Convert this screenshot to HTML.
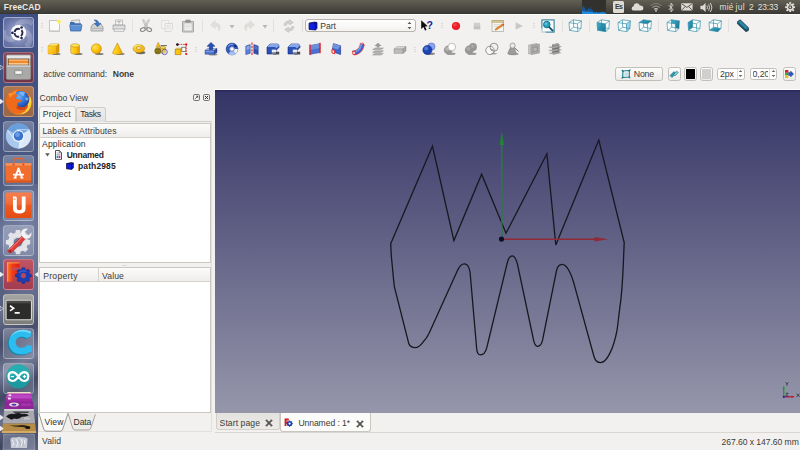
<!DOCTYPE html>
<html>
<head>
<meta charset="utf-8">
<title>FreeCAD</title>
<style>
*{box-sizing:border-box;margin:0;padding:0}
html,body{width:800px;height:450px;overflow:hidden;background:#f2f1f0;font-family:"Liberation Sans",sans-serif;font-size:9px;color:#3c3b37}
.abs{position:absolute}
#topbar{position:absolute;left:0;top:0;width:800px;height:13.6px;background:linear-gradient(#625f54 0%,#56544b 30%,#48463f 65%,#3e3d38 92%,#34332f 100%);}
#topbar .title{position:absolute;left:3px;top:1px;font-weight:bold;font-size:9.5px;color:#e8e6e0;letter-spacing:.1px}
#launcher{position:absolute;left:0;top:13.6px;width:37.6px;height:436px;background:linear-gradient(#3d4e84 0%,#46557f 28%,#586384 50%,#586080 68%,#4d5572 85%,#464d68 100%);overflow:hidden}
.tile{position:absolute;left:3px;width:31px;height:31px;border-radius:3.5px;border:1px solid rgba(255,255,255,.22);background:rgba(255,255,255,.14);overflow:hidden}
#view3d{position:absolute;left:215px;top:90px;width:585px;height:323px;background:linear-gradient(#343466 0%,#9696ab 100%)}
.t{position:absolute;white-space:nowrap}
.panel{position:absolute;background:#fff;border:1px solid #c9c6c1}
</style>
</head>
<body>
<!-- TOP BAR -->
<div id="topbar">
<!-- system monitor -->
<div class="abs" style="left:582px;top:0;width:24px;height:14px;background:#32312d"></div>
<svg class="abs" style="left:582px;top:0" width="24" height="14" viewBox="0 0 24 14"><path d="M0,14 V8 L0.6,6.4 L1,8 L1.6,4.8 L2.2,8.4 L2.8,6.6 L3.4,10 L4.4,9.4 L5,10.8 L6,8.6 L6.6,7.6 L7.2,9.8 L8,8.2 L8.6,7 L9.2,9 L10,10.4 L10.8,9.6 L11.4,11.8 L13,12 L14,12.4 L14.6,10 L15.2,12.4 L17,12.6 L18,11.6 L18.6,12.4 L19.6,11 L20.4,12.2 L21.4,11.2 L22.4,11.6 L23,12.4 L24,12.6 V14Z" fill="#1a5590"/><path d="M0,14 V11.6 L1,11 L2,11.8 L3,11.2 L4,12 L6,11.4 L8,12 L10,11.8 L11,12.6 L14,12.8 L14.6,12 L15.2,12.8 L18,12.8 L19.6,12.2 L21.4,12.4 L24,13 V14Z" fill="#1e8ee0"/></svg>
<!-- keyboard Es -->
<div class="abs" style="left:612.5px;top:1.1px;width:11.7px;height:11.5px;background:#dfdbd2;border-radius:1.5px"></div>
<!-- cloud -->
<svg class="abs" style="left:631px;top:2px" width="13" height="10" viewBox="0 0 13 10"><path d="M3.2,8.6 Q0.6,8.6 0.6,6.4 Q0.6,4.6 2.6,4.2 Q2.8,1.2 5.8,1.2 Q8.2,1.2 8.8,3.4 Q12.4,3.2 12.4,6.2 Q12.4,8.6 10,8.6Z" fill="#dfdbd2"/></svg>
<!-- wifi -->
<svg class="abs" style="left:650px;top:2px" width="12" height="10" viewBox="0 0 12 10"><path d="M0.6,3.8 Q6,-1 11.4,3.8" stroke="#7c7a74" stroke-width="1.1" fill="none"/><path d="M2.4,5.6 Q6,2.4 9.6,5.6" stroke="#a4a29c" stroke-width="1.1" fill="none"/><path d="M4.2,7.4 Q6,5.8 7.8,7.4" stroke="#d8d4cc" stroke-width="1.1" fill="none"/><circle cx="6" cy="8.8" r=".9" fill="#dfdbd2"/></svg>
<!-- bluetooth -->
<svg class="abs" style="left:667.5px;top:1.5px" width="6" height="11" viewBox="0 0 6 11"><path d="M0.8,3.2 L5,7.6 L3,9.8 V1.2 L5,3.4 L0.8,7.8" stroke="#dfdbd2" stroke-width=".9" fill="none"/></svg>
<!-- mail -->
<svg class="abs" style="left:681px;top:2.8px" width="12" height="8" viewBox="0 0 12 8"><rect x="0.2" y="0.2" width="11.4" height="7.2" rx=".8" fill="#dfdbd2"/><path d="M1,1 L5.9,4.4 L10.8,1 M1,6.8 L4.2,3.6 M10.8,6.8 L7.6,3.6" stroke="#45443f" stroke-width=".9" fill="none"/></svg>
<!-- sound -->
<svg class="abs" style="left:699.6px;top:1.6px" width="13" height="11" viewBox="0 0 13 11"><path d="M0.4,3.8 H2.6 L5.6,1 V10 L2.6,7.2 H0.4Z" fill="#dfdbd2"/><path d="M7,3.8 Q8,5.5 7,7.2 M8.6,2.4 Q10.6,5.5 8.6,8.6 M10.2,1 Q13.4,5.5 10.2,10" stroke="#dfdbd2" stroke-width=".95" fill="none"/></svg>
<!-- gear -->
<svg class="abs" style="left:785px;top:1.6px" width="10.4" height="10.4" viewBox="-5.5 -5.5 11 11"><g fill="#dfdbd2"><circle r="3.7"/><g id="tt"><rect x="-1" y="-5.4" width="2" height="3"/><rect x="-1" y="2.4" width="2" height="3"/></g><use href="#tt" transform="rotate(45)"/><use href="#tt" transform="rotate(90)"/><use href="#tt" transform="rotate(135)"/></g><circle r="2" fill="#45443f"/><circle r="1" fill="#dfdbd2"/><rect x="-.55" y="-3.6" width="1.1" height="3.2" fill="#45443f"/><rect x="-.3" y="-3.4" width=".6" height="2.6" fill="#dfdbd2"/></svg>
</div>

<div class="abs" style="left:38px;top:13.6px;width:762px;height:1.4px;background:#fbfbfa"></div>
<!-- LAUNCHER -->
<div id="launcher">
<div class="abs" style="left:-6px;top:170px;width:50px;height:150px;background:radial-gradient(ellipse at 65% 35%,rgba(170,182,214,.42),rgba(170,182,214,0) 65%)"></div>
<div class="abs" style="left:-10px;top:196px;width:30px;height:60px;background:radial-gradient(ellipse at 50% 50%,rgba(150,165,205,.4),rgba(150,165,205,0) 70%)"></div>
<div class="abs" style="left:0;top:296px;width:38px;height:140px;background:linear-gradient(150deg,rgba(150,158,185,.28) 0%,rgba(20,25,50,.22) 22%,rgba(165,172,196,.42) 40%,rgba(30,35,60,.25) 55%,rgba(160,168,192,.38) 70%,rgba(30,35,60,.2) 84%,rgba(140,146,170,.3) 100%)"></div>
<div class="tile" style="top:3.7px;background:radial-gradient(circle at 50% 50%,rgba(200,206,236,.8),rgba(125,135,185,.6) 78%);border-color:rgba(255,255,255,.4)"><svg width="29" height="29" viewBox="0 0 29 29" style="position:absolute;left:0;top:0"><path d="M14.5,14.5 C8,4 22,0 29,6 M14.5,14.5 C26,10 30,22 22,29 M14.5,14.5 C10,26 -2,22 0,12" stroke="rgba(255,255,255,.2)" stroke-width="5" fill="none"/><circle cx="14.5" cy="14.8" r="7.7" fill="#fcfcfe"/><circle cx="14.5" cy="14.8" r="4" fill="none" stroke="#26264a" stroke-width="1.9" stroke-dasharray="6.6 1.78" stroke-dashoffset="-0.9" transform="rotate(180 14.5 14.8)"/><circle cx="8.4" cy="14.8" r="1.35" fill="#26264a"/><circle cx="17.55" cy="9.5" r="1.35" fill="#26264a"/><circle cx="17.55" cy="20.1" r="1.35" fill="#26264a"/></svg></div>
<div class="tile" style="top:38.2px;background:linear-gradient(#8a4658,#6e3346);border-color:rgba(255,210,220,.35)"><svg width="29" height="29" viewBox="0 0 29 29" style="position:absolute;left:0;top:0"><g transform="translate(14.5 14.5) scale(1.1) translate(-14.5 -14.5)"><path d="M4.5,3 H24.5 Q25.5,3 25.5,4 V24 Q25.5,25.5 24,25.5 H5 Q3.5,25.5 3.5,24 V4 Q3.5,3 4.5,3Z" fill="#b9b9b7" stroke="#7e7e7c" stroke-width=".6"/><path d="M3.8,3.6 H25.2 V6 H3.8Z" fill="#e6e6e4"/><path d="M5,6.5 H24 V12.5 H5Z" fill="#5a3c28"/><path d="M5.5,7 H23.5 V8.6 H5.5Z" fill="#f7b070"/><path d="M5.5,8.6 H23.5 V11 H5.5Z" fill="#f08a28"/><path d="M5.5,10.4 H23.5 V12 H5.5Z" fill="#f9c890"/><path d="M3.8,12.6 H25.2 V25 H3.8Z" fill="#a9a9a7"/><path d="M3.8,12.6 H25.2 V14 H3.8Z" fill="#c9c9c7"/><rect x="11" y="17" width="7" height="4" rx=".8" fill="#dededc" stroke="#6e6e6c" stroke-width=".6"/><rect x="12.5" y="18.3" width="4" height="1.4" fill="#fafafa"/></g></svg></div>
<div class="tile" style="top:72.8px;background:linear-gradient(#b07850,#9a6644);border-color:rgba(255,225,200,.35)"><svg width="29" height="29" viewBox="0 0 29 29" style="position:absolute;left:0;top:0"><g transform="translate(14.5 14.5) scale(1.12) translate(-14.5 -14.5)"><defs><radialGradient id="ffo" cx=".35" cy=".4" r=".8"><stop offset="0" stop-color="#f47a20"/><stop offset=".6" stop-color="#ee6418"/><stop offset="1" stop-color="#fcc030"/></radialGradient><radialGradient id="ffb" cx=".4" cy=".35" r=".7"><stop offset="0" stop-color="#6ab4f8"/><stop offset=".6" stop-color="#2c6cd0"/><stop offset="1" stop-color="#1a3c9a"/></radialGradient></defs><circle cx="14.8" cy="15" r="11.2" fill="url(#ffo)"/><path d="M24.6,9.6 Q27,14 25.4,19 Q23,25 16.6,26 Q22.6,22.6 22.8,16.6 Q24.4,13.6 24.6,9.6Z" fill="#fdd23c"/><circle cx="16.4" cy="12.6" r="7.6" fill="url(#ffb)"/><path d="M15,6.2 Q18,4.8 20.6,6.4 Q19,7.6 19.6,9.4 Q17.4,9.6 16.6,8 Q15,7.6 15,6.2Z M20.6,11 Q22.4,10.4 23.6,12 Q22.6,14 21,13.6Z" fill="#8cc8fc" opacity=".75"/><path d="M5.4,7.6 Q7.6,6.4 9,7.2 Q10.6,5 13.4,4.4 Q11.8,6 12,7.4 Q13.4,8.4 13.4,10.4 Q12,10.2 11,10.8 Q12,12.6 14.2,12.8 Q16,12.6 17.4,13.6 Q16.4,15.2 14.4,15.4 Q13,16.4 13.6,18 Q15.6,20.4 19,19.8 Q22,19 23,16.4 Q23.4,21 19.6,23.6 Q15.4,26 10.6,24.6 Q5,22.4 3.8,16.6 Q3,11.6 5.4,7.6Z" fill="#ef6a1a"/><path d="M5.4,7.6 Q7.6,6.4 9,7.2 Q10.6,5 13.4,4.4 Q11.8,6 12,7.4 Q9,8 7.4,11 Q6,10 5.4,7.6Z" fill="#f8942c"/><path d="M13.6,18 Q15.6,20.4 19,19.8 Q22,19 23,16.4 Q22.6,19.6 20,21.4 Q16,23 12.6,20.6 Q12.8,19 13.6,18Z" fill="#c8441a"/></g></svg></div>
<div class="tile" style="top:107.3px;background:linear-gradient(rgba(255,255,255,.26),rgba(255,255,255,.10));border-color:rgba(255,255,255,.28)"><svg width="29" height="29" viewBox="0 0 29 29" style="position:absolute;left:0;top:0"><g transform="translate(14.5 14.5) scale(1.1) translate(-14.5 -14.5)"><circle cx="14.5" cy="14" r="11.4" fill="#8cb8e8"/><path d="M14.5,14 L4.6,8.4 A11.4,11.4 0 0 1 24.4,8.4 Z" fill="#6a9edc"/><path d="M14.5,14 L24.4,8.4 A11.4,11.4 0 0 1 14.5,25.4 Z" fill="#dce8f8"/><path d="M14.5,14 L14.5,25.4 A11.4,11.4 0 0 1 4.6,8.4 Z" fill="#a8c8ee"/><path d="M4.4,8.6 L11,18 M24.6,8.4 H13 M14.6,25.4 L19.8,16" stroke="#eef4fc" stroke-width=".8" opacity=".8"/><circle cx="14.5" cy="14" r="5.4" fill="#eef4fc"/><circle cx="14.5" cy="14" r="4.3" fill="#3a72cc"/><circle cx="13.6" cy="12.8" r="2.2" fill="#6a9ce4"/></g></svg></div>
<div class="tile" style="top:141.9px;background:linear-gradient(rgba(255,255,255,.26),rgba(255,255,255,.10));border-color:rgba(255,255,255,.28)"><svg width="29" height="29" viewBox="0 0 29 29" style="position:absolute;left:0;top:0"><path d="M9.6,8 V5.4 Q9.6,2.6 12.2,2.6 H16.8 Q19.4,2.6 19.4,5.4 V8" stroke="#e4602a" stroke-width="1.5" fill="none"/><path d="M1.6,7.2 H27.4 L27,26.4 H2Z" fill="#f06e2e"/><path d="M1.6,7.2 H27.4 L27.3,9.6 H1.7Z" fill="#f89460"/><path d="M2,24.6 H27 V26.4 H2Z" fill="#d6561e"/><circle cx="9.6" cy="8.6" r="1" fill="#c84c18"/><circle cx="19.4" cy="8.6" r="1" fill="#c84c18"/><path d="M14.5,12.4 L11.2,21.4 M14.5,12.4 L17.8,21.4 M9.8,18.6 H19.2" stroke="#fff" stroke-width="1.8" stroke-linecap="round" fill="none"/><path d="M9.6,21.8 H12.6 M16.4,21.8 H19.4" stroke="#fff" stroke-width="1.3"/></svg></div>
<div class="tile" style="top:176.5px;background:linear-gradient(rgba(255,255,255,.26),rgba(255,255,255,.10));border-color:rgba(255,255,255,.28)"><svg width="29" height="29" viewBox="0 0 29 29" style="position:absolute;left:0;top:0"><defs><linearGradient id="u1g" x1="0" y1="0" x2="0" y2="1"><stop offset="0" stop-color="#f8703a"/><stop offset=".5" stop-color="#ee5a20"/><stop offset="1" stop-color="#e44c12"/></linearGradient></defs><rect x="1.6" y="1.6" width="26" height="25.4" rx="1.6" fill="url(#u1g)"/><path d="M1.6,1.6 H27.6 V13 Q14,16 1.6,13Z" fill="#fff" opacity=".10"/><path d="M9,5.6 H11.8 L12.8,6.6 V17 Q12.8,19.2 15.3,19.2 Q17.8,19.2 17.8,17 V5.6 H21.6 V17.6 Q21.6,22.6 15.3,22.6 Q9,22.6 9,17.6Z" fill="#fff"/><path d="M9,8.6 L11.4,6.8 V9Z" fill="#f2a080"/></svg></div>
<div class="tile" style="top:211.0px;background:linear-gradient(rgba(255,255,255,.26),rgba(255,255,255,.10));border-color:rgba(255,255,255,.28)"><svg width="29" height="29" viewBox="0 0 29 29" style="position:absolute;left:0;top:0"><g transform="translate(14,15.2)"><path d="M-2.4,-12.6 H2.4 L3,-9.6 L5.6,-8.6 L8.2,-10.2 L11.4,-7 L9.8,-4.4 L10.8,-1.8 L13.8,-1.2 V3.4 L10.8,4 L9.8,6.6 L11.4,9.2 L8.2,12.4 L5.6,10.8 L3,11.8 L2.4,14.8 H-2.4 L-3,11.8 L-5.6,10.8 L-8.2,12.4 L-11.4,9.2 L-9.8,6.6 L-10.8,4 L-13.8,3.4 V-1.2 L-10.8,-1.8 L-9.8,-4.4 L-11.4,-7 L-8.2,-10.2 L-5.6,-8.6 L-3,-9.6Z" fill="#e4e4e8" transform="scale(.88)"/><circle cx="0" cy="1" r="5.4" fill="#cfd0d8"/><circle cx="0" cy="1" r="4.2" fill="#6e7a9e"/></g><path d="M4.6,23.4 L18.4,9.6 L21.6,12.8 L7.8,26.4 Q5.8,27.6 4.4,26.2 Q3.2,24.8 4.6,23.4Z" fill="#dc3c3a" stroke="#9c2020" stroke-width=".5"/><path d="M5.8,23.6 L18.4,11" stroke="#f48c88" stroke-width="1"/><circle cx="6.2" cy="25" r=".9" fill="#8c1c1c"/><path d="M17.4,9.4 Q16,5 19.6,3 Q21.8,2 24,2.8 L21,5.8 L21.8,8.4 L24.6,9.2 L27.4,6.2 Q28.2,9.4 25.8,11.8 Q23.4,13.6 20.4,12.4Z" fill="#f4f4f6" stroke="#b8b8c0" stroke-width=".4"/></svg></div>
<div class="tile" style="top:245.5px;background:linear-gradient(#c05464,#a23c50);border-color:rgba(255,200,210,.4)"><svg width="29" height="29" viewBox="0 0 29 29" style="position:absolute;left:0;top:0"><defs><linearGradient id="fcf" x1="0" y1="0" x2="1" y2="0"><stop offset="0" stop-color="#fa7a2c"/><stop offset=".45" stop-color="#f03c14"/><stop offset="1" stop-color="#e01c10"/></linearGradient></defs><path d="M3,2.2 H15.4 V7.4 H8.6 V10.2 H13 V15.2 H8.6 V21.8 H3Z" fill="url(#fcf)"/><path d="M3,2.2 H15.4 V3.4 H4.2 V21.8 H3Z" fill="#fca050" opacity=".8"/><g transform="translate(19.4,15.6) scale(.74)"><path d="M-1.7,-8.8 H1.7 L2.3,-6.4 L4.2,-5.6 L6.3,-6.9 L8.7,-4.5 L7.4,-2.4 L8.2,-0.5 L10.6,0.1 V3.5 L8.2,4.1 L7.4,6 L8.7,8.1 L6.3,10.5 L4.2,9.2 L2.3,10 L1.7,12.4 H-1.7 L-2.3,10 L-4.2,9.2 L-6.3,10.5 L-8.7,8.1 L-7.4,6 L-8.2,4.1 L-10.6,3.5 V0.1 L-8.2,-0.5 L-7.4,-2.4 L-8.7,-4.5 L-6.3,-6.9 L-4.2,-5.6 L-2.3,-6.4Z" transform="translate(0,-1.8)" fill="#1c3eb4" stroke="#0c1e74" stroke-width=".6"/><circle cx="0" cy="0" r="3.5" fill="#b24a5c"/><path d="M-6,-4 Q-2,-8 4,-6" stroke="#5c84f0" stroke-width="1.2" fill="none" opacity=".8"/></g></svg></div>
<div class="tile" style="top:280.1px;background:linear-gradient(#a4a4a2,#7c7c7a);border-color:rgba(255,255,255,.4)"><svg width="29" height="29" viewBox="0 0 29 29" style="position:absolute;left:0;top:0"><g transform="translate(14.5 14.5) scale(1.08) translate(-14.5 -14.5)"><rect x="3" y="6" width="23.5" height="18" rx="1.2" fill="#2c2c2a" stroke="#d8d8d6" stroke-width="1"/><rect x="3.6" y="6.6" width="22.3" height="2.2" fill="#4a4a48"/><path d="M6.6,11 L10,13.4 L6.6,15.8" stroke="#fff" stroke-width="1.5" fill="none"/><path d="M11,17.6 H15.6" stroke="#fff" stroke-width="1.5"/></g></svg></div>
<div class="tile" style="top:314.6px;background:linear-gradient(rgba(255,255,255,.26),rgba(255,255,255,.10));border-color:rgba(255,255,255,.28)"><svg width="29" height="29" viewBox="0 0 29 29" style="position:absolute;left:0;top:0"><path d="M25.6,8.6 L25.6,3.6 Q20,0.6 13.6,2.2 Q4.4,4.8 3.6,14 Q3.4,22.6 11,25.6 Q18.6,27.8 26.6,23.4 L26.6,17.6 L22,17.2 Q18.6,20.6 14,19.4 Q10.4,18 10.4,14 Q10.8,9.6 15,8.8 Q18.6,8.4 21.4,10.2Z" fill="#1a84a6"/><path d="M26.8,7.6 L26.8,2.6 Q21.2,-0.4 14.8,1.2 Q5.6,3.8 4.8,13 Q4.6,21.6 12.2,24.6 Q19.8,26.8 27.8,22.4 L27.8,16.6 L23.2,16.2 Q19.8,19.6 15.2,18.4 Q11.6,17 11.6,13 Q12,8.6 16.2,7.8 Q19.8,7.4 22.6,9.2Z" fill="#2cbcf0"/><path d="M26.8,2.6 Q21.2,-0.4 14.8,1.2 Q8.6,3 6,8.6 Q9.6,3.8 15.4,2.8 Q21,2 26.8,4.6Z" fill="#84e2fc" opacity=".8"/></svg></div>
<div class="tile" style="top:349.2px;background:linear-gradient(rgba(255,255,255,.26),rgba(255,255,255,.10));border-color:rgba(255,255,255,.28)"><svg width="29" height="29" viewBox="0 0 29 29" style="position:absolute;left:0;top:0"><circle cx="14.4" cy="12.6" r="12" fill="#1c9aa0"/><path d="M2.4,12.6 A12,12 0 0 1 26.4,12.6Z" fill="#26aeb2"/><path d="M14.4,12.6 Q11.4,8.2 8.4,8.2 Q4.6,8.4 4.6,12.6 Q4.6,16.8 8.4,17 Q11.4,17 14.4,12.6 Q17.4,8.2 20.4,8.2 Q24.2,8.4 24.2,12.6 Q24.2,16.8 20.4,17 Q17.4,17 14.4,12.6Z" fill="none" stroke="#fff" stroke-width="2.2"/><path d="M6.8,12.6 H10 M18.8,12.6 H22.2 M20.5,11 V14.2" stroke="#fff" stroke-width="1.2"/></svg></div>
<svg class="abs" style="left:0;top:376.4px" width="38" height="60" viewBox="0 390 38 60"><path d="M7.4,392 H30.6 L33.6,409 H4.4Z" fill="#a428a8"/><path d="M7.4,392 H30.6 L30.9,393.4 H7.1Z" fill="#e8e0c8"/><path d="M6.6,394.6 H31.4 L32.2,398.6 H5.8Z" fill="#c450cc" opacity=".75"/><rect x="8.6" y="394.4" width="2.6" height="1.7" fill="#f4e8f8"/><rect x="8" y="397.6" width="2.8" height="1.9" fill="#f4e8f8"/><path d="M5,401.4 H33 L33.6,409 H4.4Z" fill="#8c2494" opacity=".85"/><ellipse cx="14" cy="404.6" rx="4.8" ry="2" fill="#dcd8e0"/><ellipse cx="14" cy="404.8" rx="2.5" ry=".95" fill="#5c2cb4"/><path d="M21,403.4 H31 L31.4,406 H21Z" fill="#b040b8" opacity=".6"/><path d="M4.4,409 H33.6 L35.2,423.5 H2.8Z" fill="#a8a8b0"/><path d="M4.4,409 H33.6 L33.8,410.8 H4.2Z" fill="#d4d4d8"/><path d="M6,416.6 Q9,413 14,414 Q18,412 22,414 Q27,413.4 29,415.4 Q25,417 22,416.8 Q18,420 14,418.6 Q12,420.2 10,419 Q8,418 6,416.6Z" fill="#18181c"/><path d="M13,411.4 H29 L28,413 H14Z" fill="#404044"/><path d="M24,417.6 Q28,417 31,418.6 Q28,420 24,419.4Z" fill="#c8c8cc"/><path d="M2.8,423.5 H35.2 L36.2,433 H1.8Z" fill="#b48c48"/><path d="M8,425 Q14,426 20,425.2 Q26,424.6 29,427 Q25,428.2 23,427 Q16,427.6 8,425Z" fill="#2c2418"/><ellipse cx="27.8" cy="427.4" rx="2.6" ry="1.5" fill="#18140c"/><path d="M2,431 H36 L36.2,433 H1.8Z" fill="#d4ac64"/><path d="M3.6,434 H34.4 L35,450 H3Z" fill="rgba(200,205,225,.30)" stroke="rgba(255,255,255,.32)" stroke-width=".7"/><path d="M10.4,438.6 Q13,436.6 16,437.6 Q19,436 22,437.4 Q25.6,436.8 27.6,438.8 L27,448 H11Z" fill="rgba(232,234,240,.72)"/><path d="M12,440 L14,443 L12.6,446 M16,439 L18,442.6 L16.6,446.6 M21,439 L22.6,442 L21,446 M25,440 L24.4,444" stroke="rgba(255,255,255,.85)" stroke-width=".9" fill="none"/><path d="M14,441 L16.6,444 M19,440 L20.6,445 M23.4,441 L23,446" stroke="rgba(150,155,175,.7)" stroke-width=".7" fill="none"/></svg>
<svg class="abs" style="left:0;top:51.0px" width="4" height="5" viewBox="0 0 4 5"><path d="M0,0 L3.4,2.5 L0,5Z" fill="none" stroke="#e4e4ec" stroke-width=".7"/></svg>
<svg class="abs" style="left:0;top:85.6px" width="4" height="5" viewBox="0 0 4 5"><path d="M0,0 L3.4,2.5 L0,5Z" fill="#f0f0f4" stroke="#e4e4ec" stroke-width=".7"/></svg>
<svg class="abs" style="left:0;top:258.3px" width="4" height="5" viewBox="0 0 4 5"><path d="M0,0 L3.4,2.5 L0,5Z" fill="#f0f0f4" stroke="#e4e4ec" stroke-width=".7"/></svg>
<svg class="abs" style="left:0;top:292.9px" width="4" height="5" viewBox="0 0 4 5"><path d="M0,0 L3.4,2.5 L0,5Z" fill="none" stroke="#e4e4ec" stroke-width=".7"/></svg>
<svg class="abs" style="left:0;top:401.9px" width="4" height="5" viewBox="0 0 4 5"><path d="M0,0 L3.4,2.5 L0,5Z" fill="#f0f0f4" stroke="#e4e4ec" stroke-width=".7"/></svg>
<svg class="abs" style="left:0;top:412.4px" width="4" height="5" viewBox="0 0 4 5"><path d="M0,0 L3.4,2.5 L0,5Z" fill="#f0f0f4" stroke="#e4e4ec" stroke-width=".7"/></svg>
<svg class="abs" style="left:33.8px;top:258.4px" width="4" height="5" viewBox="0 0 4 5"><path d="M4,0 L0.6,2.5 L4,5Z" fill="#f0f0f4"/></svg>
</div>

<!-- TOOLBARS -->
<div id="toolbars">
<div class="abs" style="left:41.0px;top:23.3px;width:2px;height:1px;background:#dcdad6;box-shadow:0 2px 0 #dcdad6,0 4px 0 #dcdad6"></div>
<div class="abs" style="left:41.0px;top:46.8px;width:2px;height:1px;background:#dcdad6;box-shadow:0 2px 0 #dcdad6,0 4px 0 #dcdad6"></div>
<svg class="abs" style="left:48.0px;top:18.8px" width="14" height="14" viewBox="0 0 14 14" ><path d="M1.5,1.5 H11.5 V12.5 H1.5 Z" fill="#fafafa" stroke="#b9b7b2" stroke-width=".8"/><path d="M2,11 H11 V12.2 H2Z" fill="#dcdad6"/><circle cx="11" cy="2.6" r="2.1" fill="#fff27a"/><circle cx="11" cy="2.6" r="1.1" fill="#ffe935"/></svg>
<svg class="abs" style="left:69.0px;top:18.8px" width="14" height="14" viewBox="0 0 14 14" ><path d="M2.5,1.5 L10.5,0.8 L11,6 L3,6 Z" fill="#e8e8e8" stroke="#8e8e8e" stroke-width=".6"/><path d="M1,3 H5 L6,4.2 H12 V6 H1Z" fill="#3f6fb0"/><path d="M0.8,5.8 H13 L11.8,12 H1.6 Z" fill="#5b8fd6" stroke="#2f5c99" stroke-width=".7"/><path d="M1.2,6.3 H12.4" stroke="#9cc0ee" stroke-width=".6"/></svg>
<svg class="abs" style="left:90.0px;top:18.8px" width="14" height="14" viewBox="0 0 14 14" ><path d="M1,8 L3,5 H11 L13,8 V12 H1Z" fill="#cfd0d1" stroke="#86878a" stroke-width=".7"/><path d="M1.3,9 H12.7 V11.8 H1.3Z" fill="#b5b6b8"/><path d="M2,10.5 H12" stroke="#ededed" stroke-width=".6"/><path d="M4,1 C7,0.6 8.6,2 8.6,4.2 H10.8 L7.6,7.8 L4.4,4.2 H6.4 C6.4,2.8 5.4,1.6 4,1Z" fill="#3a78c8" stroke="#1f4f90" stroke-width=".5"/></svg>
<svg class="abs" style="left:111.5px;top:18.8px" width="14" height="14" viewBox="0 0 14 14" ><path d="M3.5,1 H10.5 V6 H3.5Z" fill="#f4f4f4" stroke="#a9a9a9" stroke-width=".7"/><path d="M5,2.6 H9 M7,2.6 V4.6" stroke="#999" stroke-width=".7"/><path d="M1,6 H13 V10.5 H1Z" fill="#d2d2d2" stroke="#9b9b9b" stroke-width=".7"/><path d="M2,10 H12 V12.5 H2Z" fill="#ececec" stroke="#a9a9a9" stroke-width=".6"/><path d="M1.5,8.2 H12.5" stroke="#f3f3f3" stroke-width=".7"/></svg>
<div class="abs" style="left:131.7px;top:19.3px;width:1px;height:13px;background:#e3e1dd"></div>
<svg class="abs" style="left:138.5px;top:18.8px" width="14" height="14" viewBox="0 0 14 14" ><path d="M3.6,0.8 L5,0.8 L8.6,8.6 L7,9.2Z M10.4,0.8 L9,0.8 L5.4,8.6 L7,9.2Z" fill="#e9e9e8" stroke="#a4a4a2" stroke-width=".6"/><ellipse cx="3.9" cy="10.6" rx="2.5" ry="1.7" fill="none" stroke="#8a8a88" stroke-width="1.2" transform="rotate(-20 3.9 10.6)"/><ellipse cx="10.1" cy="10.6" rx="2.5" ry="1.7" fill="none" stroke="#8a8a88" stroke-width="1.2" transform="rotate(20 10.1 10.6)"/></svg>
<svg class="abs" style="left:159.7px;top:18.8px" width="14" height="14" viewBox="0 0 14 14" ><path d="M1.5,1.5 H8.5 V9.5 H1.5Z" fill="#f4f3f2" stroke="#dddbd8" stroke-width=".8"/><path d="M5,4.5 H12.5 V10.5 L10.5,12.5 H5Z" fill="#f1f0ef" stroke="#d6d4d1" stroke-width=".8"/><path d="M6.5,6.5 H11 M6.5,8 H11 M6.5,9.5 H10" stroke="#dedcd9" stroke-width=".6"/></svg>
<svg class="abs" style="left:181.0px;top:18.8px" width="14" height="14" viewBox="0 0 14 14" ><path d="M1.5,2.5 H12.5 V13 H1.5Z" fill="#d2d2d0" stroke="#9a9a98" stroke-width=".8"/><path d="M3,4 H11 V11.8 H3Z" fill="#f3f3f2" stroke="#a7a7a5" stroke-width=".5"/><path d="M4.8,1 H9.2 V3.4 H4.8Z" fill="#9b9b99" stroke="#7d7d7b" stroke-width=".5"/><path d="M4.2,6 H9.8 M4.2,7.6 H9.8 M4.2,9.2 H8.5" stroke="#d0d0ce" stroke-width=".6"/></svg>
<div class="abs" style="left:201.7px;top:19.3px;width:1px;height:13px;background:#e3e1dd"></div>
<svg class="abs" style="left:208.5px;top:18.8px" width="14" height="14" viewBox="0 0 14 14" ><path d="M6.2,1.5 L1.5,5.8 L6.2,9.5 V7.3 C9,7.1 10.4,8.6 9.6,12 C12.6,9.4 12,4.2 6.2,4 Z" fill="#e0deda" stroke="#d6d4d0" stroke-width=".5"/></svg>
<svg class="abs" style="left:228.7px;top:23.9px" width="6" height="5" viewBox="0 0 6 5" ><path d="M0.5,1 H5.5 L3,4.5Z" fill="#b9b7b3"/></svg>
<svg class="abs" style="left:242.0px;top:18.8px" width="14" height="14" viewBox="0 0 14 14" ><path d="M7.8,1.5 L12.5,5.8 L7.8,9.5 V7.3 C5,7.1 3.6,8.6 4.4,12 C1.4,9.4 2,4.2 7.8,4 Z" fill="#e0deda" stroke="#d6d4d0" stroke-width=".5"/></svg>
<svg class="abs" style="left:262.0px;top:23.9px" width="6" height="5" viewBox="0 0 6 5" ><path d="M0.5,1 H5.5 L3,4.5Z" fill="#b9b7b3"/></svg>
<div class="abs" style="left:273.4px;top:19.3px;width:1px;height:13px;background:#e3e1dd"></div>
<svg class="abs" style="left:281.5px;top:18.8px" width="14" height="14" viewBox="0 0 14 14" ><path d="M2,6.4 C2,3.4 4.6,1.6 7.4,2 L7.4,0.6 L11.4,3.4 L7.4,6 V4.4 C5.8,4.2 4.6,5 4.4,6.4Z" fill="#d0cfcd" stroke="#bcbbb9" stroke-width=".5"/><path d="M12,7.6 C12,10.6 9.4,12.4 6.6,12 L6.6,13.4 L2.6,10.6 L6.6,8 V9.6 C8.2,9.8 9.4,9 9.6,7.6Z" fill="#d0cfcd" stroke="#bcbbb9" stroke-width=".5"/></svg>
<div class="abs" style="left:302.0px;top:19.3px;width:1px;height:13px;background:#e3e1dd"></div>
<div class="abs" style="left:305px;top:19px;width:110.5px;height:13px;border:1px solid #b8b5af;border-radius:3px;background:linear-gradient(#ffffff,#f3f2f0)"></div>
<svg class="abs" style="left:308.0px;top:20.6px" width="10" height="10" viewBox="0 0 10 10" ><path d="M1,2.2 L6.6,1 L9,1.6 L9,7.6 L7.4,9 L1,8.4Z" fill="#0a18c8" stroke="#050a50" stroke-width=".7"/><path d="M1,2.2 L6.8,2.2 L9,1.6 M6.8,2.2 L7.2,9" stroke="#050a50" stroke-width=".6" fill="none"/><path d="M1.3,2.5 H6.6 L7,8.6 L1.3,8.1Z" fill="#1020e0"/></svg>
<svg class="abs" style="left:407.0px;top:21.3px" width="5" height="9" viewBox="0 0 5 9" ><path d="M0.6,3 L2.5,0.8 L4.4,3Z M0.6,6 L2.5,8.2 L4.4,6Z" fill="#5c5a56"/></svg>
<svg class="abs" style="left:419.5px;top:18.8px" width="14" height="14" viewBox="0 0 14 14" ><path d="M1.2,1.2 L1.2,10 L3.4,8 L5,11.6 L6.6,10.9 L5,7.4 L7.8,7.2 Z" fill="#0d0d0d"/><text x="6.6" y="10" font-family="Liberation Sans" font-weight="bold" font-size="10.5" fill="#1a2590">?</text></svg>
<div class="abs" style="left:440.9px;top:23.3px;width:2px;height:1px;background:#dcdad6;box-shadow:0 2px 0 #dcdad6,0 4px 0 #dcdad6"></div>
<svg class="abs" style="left:449.0px;top:18.8px" width="14" height="14" viewBox="0 0 14 14" ><circle cx="7" cy="7" r="4.1" fill="#ee1c25"/><circle cx="6" cy="5.8" r="1.8" fill="#f6535a" opacity=".7"/></svg>
<svg class="abs" style="left:469.5px;top:18.8px" width="14" height="14" viewBox="0 0 14 14" ><rect x="3.8" y="3.8" width="6.4" height="6.4" fill="#cfcecc"/><rect x="3.8" y="7.4" width="6.4" height="2.8" fill="#c2c1bf"/></svg>
<svg class="abs" style="left:490.5px;top:18.8px" width="14" height="14" viewBox="0 0 14 14" ><path d="M1,1.5 H12.5 V12.5 H1Z" fill="#f6f5f0" stroke="#a8a69c" stroke-width=".7"/><path d="M1,1.5 H12.5 V3.4 H1Z" fill="#d9c98a" stroke="#a8966a" stroke-width=".5"/><path d="M2.6,5.6 H9 M2.6,7.4 H7" stroke="#c8c6bf" stroke-width=".6"/><path d="M4.6,9.6 L11.6,4.8 L12.8,6.2 L5.8,10.8 L4,11.2Z" fill="#e98a2a" stroke="#a85a18" stroke-width=".4"/><path d="M11,5.2 L12.2,6.6 L13.2,5.8 L12,4.5Z" fill="#d44"/></svg>
<svg class="abs" style="left:511.5px;top:18.8px" width="14" height="14" viewBox="0 0 14 14" ><path d="M3.6,3.2 L11,7 L3.6,10.8Z" fill="#c9c8c6"/></svg>
<div class="abs" style="left:532.7px;top:23.3px;width:2px;height:1px;background:#dcdad6;box-shadow:0 2px 0 #dcdad6,0 4px 0 #dcdad6"></div>
<svg class="abs" style="left:540.5px;top:18.8px" width="14" height="14" viewBox="0 0 14 14" ><rect x="0.9" y="0.9" width="12.2" height="12.2" fill="#f8fbfc" stroke="#1f7690" stroke-width="1"/><path d="M0.9,9.4 V13.1 H4.6" stroke="#f2f1f0" stroke-width="1.2" fill="none"/><circle cx="5.8" cy="5.6" r="3.3" fill="#2aa0c0" stroke="#176a84" stroke-width=".9"/><circle cx="5" cy="4.7" r="1.3" fill="#6fd0e6" opacity=".85"/><path d="M8.2,8.2 L11.6,11.6" stroke="#12586e" stroke-width="1.9" stroke-linecap="round"/></svg>
<div class="abs" style="left:561.5px;top:19.3px;width:1px;height:13px;background:#e3e1dd"></div>
<svg width="0" height="0" style="position:absolute"><defs><linearGradient id="tg" x1="0" y1="0" x2="1" y2="1"><stop offset="0" stop-color="#3cb0cc"/><stop offset="1" stop-color="#14708c"/></linearGradient></defs></svg>
<svg class="abs" style="left:568.0px;top:18.8px" width="14" height="14" viewBox="0 0 14 14" ><path d="M1.0,3.6 L5.4,0.8 L13.4,1.9 L12.9,9.5 L9.8,12.7 L1.6,11.3Z" fill="#fcfefe"/><g stroke="#2a8aa4" stroke-width=".65" fill="none" stroke-linejoin="round"><path d="M5.4,0.8 L13.4,1.9 L12.9,9.5 L5.7,8.2Z M1.0,3.6 L9.4,4.8 L9.8,12.7 L1.6,11.3Z"/><path d="M1.0,3.6 L5.4,0.8"/><path d="M9.4,4.8 L13.4,1.9"/><path d="M9.8,12.7 L12.9,9.5"/><path d="M1.6,11.3 L5.7,8.2"/></g></svg>
<div class="abs" style="left:588.5px;top:19.3px;width:1px;height:13px;background:#e3e1dd"></div>
<svg class="abs" style="left:595.5px;top:18.8px" width="14" height="14" viewBox="0 0 14 14" ><path d="M1.0,3.6 L5.4,0.8 L13.4,1.9 L12.9,9.5 L9.8,12.7 L1.6,11.3Z" fill="#fcfefe"/><path d="M1.0,3.6 L9.4,4.8 L9.8,12.7 L1.6,11.3Z" fill="url(#tg)"/><g stroke="#2a8aa4" stroke-width=".65" fill="none" stroke-linejoin="round"><path d="M5.4,0.8 L13.4,1.9 L12.9,9.5 L5.7,8.2Z M1.0,3.6 L9.4,4.8 L9.8,12.7 L1.6,11.3Z"/><path d="M1.0,3.6 L5.4,0.8"/><path d="M9.4,4.8 L13.4,1.9"/><path d="M9.8,12.7 L12.9,9.5"/><path d="M1.6,11.3 L5.7,8.2"/></g></svg>
<svg class="abs" style="left:616.5px;top:18.8px" width="14" height="14" viewBox="0 0 14 14" ><path d="M1.0,3.6 L5.4,0.8 L13.4,1.9 L12.9,9.5 L9.8,12.7 L1.6,11.3Z" fill="#fcfefe"/><path d="M9.4,4.8 L13.4,1.9 L12.9,9.5 L9.8,12.7Z" fill="#9ad4e2"/><g stroke="#2a8aa4" stroke-width=".65" fill="none" stroke-linejoin="round"><path d="M5.4,0.8 L13.4,1.9 L12.9,9.5 L5.7,8.2Z M1.0,3.6 L9.4,4.8 L9.8,12.7 L1.6,11.3Z"/><path d="M1.0,3.6 L5.4,0.8"/><path d="M9.4,4.8 L13.4,1.9"/><path d="M9.8,12.7 L12.9,9.5"/><path d="M1.6,11.3 L5.7,8.2"/></g></svg>
<svg class="abs" style="left:637.5px;top:18.8px" width="14" height="14" viewBox="0 0 14 14" ><path d="M1.0,3.6 L5.4,0.8 L13.4,1.9 L12.9,9.5 L9.8,12.7 L1.6,11.3Z" fill="#fcfefe"/><path d="M1.0,3.6 L5.4,0.8 L13.4,1.9 L9.4,4.8Z" fill="url(#tg)"/><g stroke="#2a8aa4" stroke-width=".65" fill="none" stroke-linejoin="round"><path d="M5.4,0.8 L13.4,1.9 L12.9,9.5 L5.7,8.2Z M1.0,3.6 L9.4,4.8 L9.8,12.7 L1.6,11.3Z"/><path d="M1.0,3.6 L5.4,0.8"/><path d="M9.4,4.8 L13.4,1.9"/><path d="M9.8,12.7 L12.9,9.5"/><path d="M1.6,11.3 L5.7,8.2"/></g></svg>
<div class="abs" style="left:658.0px;top:19.3px;width:1px;height:13px;background:#e3e1dd"></div>
<svg class="abs" style="left:665.5px;top:18.8px" width="14" height="14" viewBox="0 0 14 14" ><path d="M1.0,3.6 L5.4,0.8 L13.4,1.9 L12.9,9.5 L9.8,12.7 L1.6,11.3Z" fill="#fcfefe"/><path d="M5.4,0.8 L13.4,1.9 L12.9,9.5 L5.7,8.2Z" fill="url(#tg)"/><path d="M1.0,3.6 L9.4,4.8 L9.8,12.7 L1.6,11.3Z" fill="#fcfefe" opacity=".92"/><g stroke="#2a8aa4" stroke-width=".65" fill="none" stroke-linejoin="round"><path d="M5.4,0.8 L13.4,1.9 L12.9,9.5 L5.7,8.2Z M1.0,3.6 L9.4,4.8 L9.8,12.7 L1.6,11.3Z"/><path d="M1.0,3.6 L5.4,0.8"/><path d="M9.4,4.8 L13.4,1.9"/><path d="M9.8,12.7 L12.9,9.5"/><path d="M1.6,11.3 L5.7,8.2"/></g></svg>
<svg class="abs" style="left:686.5px;top:18.8px" width="14" height="14" viewBox="0 0 14 14" ><path d="M1.0,3.6 L5.4,0.8 L13.4,1.9 L12.9,9.5 L9.8,12.7 L1.6,11.3Z" fill="#fcfefe"/><path d="M1.0,3.6 L5.4,0.8 L5.7,8.2 L1.6,11.3Z" fill="url(#tg)"/><g stroke="#2a8aa4" stroke-width=".65" fill="none" stroke-linejoin="round"><path d="M5.4,0.8 L13.4,1.9 L12.9,9.5 L5.7,8.2Z M1.0,3.6 L9.4,4.8 L9.8,12.7 L1.6,11.3Z"/><path d="M1.0,3.6 L5.4,0.8"/><path d="M9.4,4.8 L13.4,1.9"/><path d="M9.8,12.7 L12.9,9.5"/><path d="M1.6,11.3 L5.7,8.2"/></g></svg>
<svg class="abs" style="left:707.5px;top:18.8px" width="14" height="14" viewBox="0 0 14 14" ><path d="M1.0,3.6 L5.4,0.8 L13.4,1.9 L12.9,9.5 L9.8,12.7 L1.6,11.3Z" fill="#fcfefe"/><path d="M1.6,11.3 L5.7,8.2 L12.9,9.5 L9.8,12.7Z" fill="url(#tg)"/><g stroke="#2a8aa4" stroke-width=".65" fill="none" stroke-linejoin="round"><path d="M5.4,0.8 L13.4,1.9 L12.9,9.5 L5.7,8.2Z M1.0,3.6 L9.4,4.8 L9.8,12.7 L1.6,11.3Z"/><path d="M1.0,3.6 L5.4,0.8"/><path d="M9.4,4.8 L13.4,1.9"/><path d="M9.8,12.7 L12.9,9.5"/><path d="M1.6,11.3 L5.7,8.2"/></g></svg>
<div class="abs" style="left:728.0px;top:19.3px;width:1px;height:13px;background:#e3e1dd"></div>
<svg class="abs" style="left:735.5px;top:18.8px" width="14" height="14" viewBox="0 0 14 14" ><path d="M1.6,2.4 L4.2,0.8 L12.6,8.8 L12.4,11.6 L10,12.8 L1.4,4.8Z" fill="#1a5468" stroke="#0d2f3c" stroke-width=".6"/><path d="M2,2.8 L4.2,1.4 L12,8.8 L10,10.2Z" fill="#2c8aa6"/></svg>
<svg width="0" height="0" style="position:absolute"><defs><linearGradient id="yg" x1="0" y1="0" x2="1" y2="1"><stop offset="0" stop-color="#ffdc40"/><stop offset="1" stop-color="#f4a800"/></linearGradient><linearGradient id="yh" x1="0" y1="0" x2="1" y2="0"><stop offset="0" stop-color="#ffd838"/><stop offset=".55" stop-color="#fcc40c"/><stop offset="1" stop-color="#e89c00"/></linearGradient><radialGradient id="yr" cx=".36" cy=".32" r=".75"><stop offset="0" stop-color="#ffe25a"/><stop offset=".55" stop-color="#fcc20c"/><stop offset="1" stop-color="#e89a00"/></radialGradient></defs></svg>
<svg class="abs" style="left:47.0px;top:42.3px" width="14" height="14" viewBox="0 0 14 14" ><ellipse cx="9.4" cy="12" rx="4.2" ry="1.1" fill="#3c3c34" opacity=".65"/><path d="M1.2,4 L3.8,2 H12 V9.8 L9.4,12 H1.2Z" fill="#e49c00" stroke="#a87400" stroke-width=".5"/><path d="M1.2,4 H9.4 V12 H1.2Z" fill="url(#yg)"/><path d="M1.2,4 L3.8,2 H12 L9.4,4Z" fill="#ffe668"/><path d="M1.2,4 H9.4 V12 M9.4,4 L12,2" stroke="#c08a00" stroke-width=".45" fill="none"/></svg>
<svg class="abs" style="left:68.5px;top:42.3px" width="14" height="14" viewBox="0 0 14 14" ><ellipse cx="9.4" cy="12" rx="4.2" ry="1.1" fill="#3c3c34" opacity=".65"/><path d="M1.8,3.4 V10.6 C1.8,12.6 10.4,12.6 10.4,10.6 V3.4Z" fill="url(#yh)" stroke="#a87400" stroke-width=".5"/><ellipse cx="6.1" cy="3.4" rx="4.3" ry="1.7" fill="#ffe25a" stroke="#b88400" stroke-width=".5"/></svg>
<svg class="abs" style="left:89.7px;top:42.3px" width="14" height="14" viewBox="0 0 14 14" ><ellipse cx="9.4" cy="12" rx="4.2" ry="1.1" fill="#3c3c34" opacity=".65"/><circle cx="6.4" cy="6.8" r="5" fill="url(#yr)" stroke="#b07c00" stroke-width=".5"/></svg>
<svg class="abs" style="left:110.5px;top:42.3px" width="14" height="14" viewBox="0 0 14 14" ><ellipse cx="9.4" cy="12" rx="4.2" ry="1.1" fill="#3c3c34" opacity=".65"/><path d="M6.4,1 L1.4,11 C1.4,12.8 11.4,12.8 11.4,11Z" fill="url(#yh)" stroke="#b07c00" stroke-width=".5"/></svg>
<svg class="abs" style="left:131.7px;top:42.3px" width="14" height="14" viewBox="0 0 14 14" ><ellipse cx="8.6" cy="10.6" rx="4.8" ry="1.7" fill="#2c2c24" opacity=".7"/><ellipse cx="6.8" cy="6.6" rx="5.8" ry="4.1" fill="url(#yg)" stroke="#a87400" stroke-width=".5"/><ellipse cx="6.8" cy="6" rx="2.7" ry="1.3" fill="#f8ecc0" stroke="#b07c00" stroke-width=".6"/><path d="M1.8,5.4 C2.8,3.4 6,2.8 9,3.2" stroke="#fff27a" stroke-width="1" fill="none"/></svg>
<svg class="abs" style="left:153.5px;top:42.3px" width="14" height="14" viewBox="0 0 14 14" ><path d="M4.2,0.4 L2,5.2 H6.4Z" fill="url(#yh)" stroke="#8a6400" stroke-width=".4"/><path d="M6.6,3.6 H13" stroke="#4d4538" stroke-width=".8"/><path d="M6.4,5.4 V10.4 C6.4,11.6 11.4,11.6 11.4,10.4 V5.4Z" fill="url(#yh)" stroke="#8a6400" stroke-width=".4"/><ellipse cx="8.9" cy="5.4" rx="2.5" ry="1" fill="#ffe25a" stroke="#8a6400" stroke-width=".4"/><circle cx="3.8" cy="9" r="3.1" fill="#a48c1c" stroke="#5d5010" stroke-width=".5"/><path d="M0.9,9 H6.7 M1.3,7.4 H6.3 M1.3,10.6 H6.3" stroke="#4d4410" stroke-width=".5"/><circle cx="10.6" cy="10" r="2.7" fill="#f2f1f0" fill-opacity=".35" stroke="#343a9c" stroke-width=".7"/></svg>
<svg class="abs" style="left:174.0px;top:42.3px" width="14" height="14" viewBox="0 0 14 14" ><path d="M1.2,7.4 H7 V12.6 H1.2Z" fill="#ffc40c" stroke="#9a6c00" stroke-width=".6"/><path d="M1.2,7.4 L2.6,6.2 H8.2 L7,7.4Z" fill="#ffe168" stroke="#9a6c00" stroke-width=".4"/><path d="M4,2.4 H12 M12.2,3 V12" stroke="#e01818" stroke-width=".9" stroke-dasharray="1.6 1"/><rect x="7.8" y="5.2" width="4" height="4.2" fill="#fbfbfb" stroke="#555" stroke-width=".7"/><circle cx="3.4" cy="2.6" r="1.3" fill="#111"/><circle cx="12.2" cy="2.4" r="1.1" fill="#e01818"/><circle cx="12.2" cy="12" r="1.1" fill="#e01818"/></svg>
<div class="abs" style="left:195.0px;top:46.8px;width:2px;height:1px;background:#dcdad6;box-shadow:0 2px 0 #dcdad6,0 4px 0 #dcdad6"></div>
<svg class="abs" style="left:203.5px;top:42.3px" width="14" height="14" viewBox="0 0 14 14" ><ellipse cx="9" cy="12.4" rx="4.6" ry="1" fill="#3c3c38" opacity=".5"/><path d="M1,8.4 L3.6,6.6 H13 L10.4,8.4Z" fill="#b4c8f4" stroke="#203a88" stroke-width=".4"/><path d="M1,8.4 H10.4 V12.2 H1Z" fill="#5078d4" stroke="#182c74" stroke-width=".4"/><path d="M1.4,8.8 H10 V10 H1.4Z" fill="#86a6ec" opacity=".7"/><path d="M10.4,8.4 L13,6.6 V10.4 L10.4,12.2Z" fill="#2c4cac" stroke="#182c74" stroke-width=".4"/><path d="M7,0.6 L3.2,4.2 H5.4 V7.4 H8.6 V4.2 H10.8Z" fill="#2450c0" stroke="#122a78" stroke-width=".6"/></svg>
<svg class="abs" style="left:224.5px;top:42.3px" width="14" height="14" viewBox="0 0 14 14" ><circle cx="7" cy="7" r="4.2" fill="none" stroke="#3058c4" stroke-width="3.4"/><circle cx="7" cy="7" r="5.9" fill="none" stroke="#15307c" stroke-width=".5"/><path d="M7,7 L3.4,12 A6,6 0 0 0 10.6,12Z" fill="#a8bef0"/><path d="M7,7 L12.9,7 A5.9,5.9 0 0 1 10.6,11.8Z" fill="#f2f1f0"/><circle cx="7" cy="7" r="2.3" fill="#f4f6fc" stroke="#15307c" stroke-width=".5"/><path d="M9.6,2.6 L12,4.6 L9.4,5.4Z" fill="#101c50"/><path d="M3,4.4 Q5,2 8,2.2" stroke="#86a4ec" stroke-width="1" fill="none"/></svg>
<svg class="abs" style="left:244.5px;top:42.3px" width="14" height="14" viewBox="0 0 14 14" ><path d="M0.8,4 L5.2,2.6 V11.2 L0.8,12.6Z" fill="#5a82dc" stroke="#1a3484" stroke-width=".5"/><path d="M1.4,4.6 L4.6,3.6 V7 L1.4,8Z" fill="#9ab6f0" opacity=".7"/><path d="M8.8,2.6 L13.2,4 V12.6 L8.8,11.2Z" fill="#2c50b4" stroke="#1a3484" stroke-width=".5"/><path d="M9.4,3.6 L12.6,4.6 V8 L9.4,7Z" fill="#5a80d8" opacity=".7"/><path d="M7,0.4 V13.6" stroke="#f01010" stroke-width="1.1" stroke-dasharray="2.4 1"/></svg>
<svg class="abs" style="left:265.5px;top:42.3px" width="14" height="14" viewBox="0 0 14 14" ><path d="M7,12.4 H13.2 V9.8 H9Z" fill="#4a4a48"/><path d="M1,5 L4,2 H11 C12.6,2 13,3 13,4.4 V5.4 L10,8.4 V12 H1Z" fill="#2c50b4" stroke="#14287a" stroke-width=".6"/><path d="M1,5 L4,2 H11 C12.4,2 13,2.8 13,4 L10,6.6 C10,5.6 9.4,5 8.4,5Z" fill="#86a6ea"/><path d="M5.8,7.6 H10 V10.6 H5.8Z" fill="#e8ecf6"/><path d="M5.8,10.6 H10 V12 H5.8Z" fill="#7a7a80"/></svg>
<svg class="abs" style="left:286.5px;top:42.3px" width="14" height="14" viewBox="0 0 14 14" ><path d="M7,12.4 H13.2 V9.8 H9Z" fill="#4a4a48"/><path d="M1,5 L4,2 H11.4 L13,3.6 V5.4 L10,8.4 V12 H1Z" fill="#2c50b4" stroke="#14287a" stroke-width=".6"/><path d="M1,5 L4,2 H11.4 L13,3.6 L10,6.6 L8.4,5Z" fill="#86a6ea"/><path d="M5.8,7.6 H10 V10.6 H5.8Z" fill="#e8ecf6"/><path d="M5.8,10.6 H10 V12 H5.8Z" fill="#7a7a80"/></svg>
<svg class="abs" style="left:308.0px;top:42.3px" width="14" height="14" viewBox="0 0 14 14" ><path d="M2,3.4 L12,1.6 V10.6 L2,12.4Z" fill="#4a70d0" stroke="#2040a0" stroke-width=".4"/><path d="M2,3.4 L12,1.6 V6 L2,8Z" fill="#7c9ae2" opacity=".7"/><path d="M2,2.6 V13 M12,0.8 V11.2" stroke="#ea1c1c" stroke-width="1.3"/></svg>
<svg class="abs" style="left:329.8px;top:42.3px" width="14" height="14" viewBox="0 0 14 14" ><path d="M3.4,1.6 L10.6,3.8 V12.6 L2,9.6Z" fill="#3c64cc" stroke="#1a3688" stroke-width=".6"/><path d="M3.4,1.6 L10.6,3.8 L8,7.4 L2.6,6Z" fill="#7e9ee6" opacity=".8"/><path d="M2,7.6 L4.6,8.4 V11.8 L2,11Z" fill="#f4f4f4" stroke="#e81c1c" stroke-width=".9"/></svg>
<svg class="abs" style="left:350.8px;top:42.3px" width="14" height="14" viewBox="0 0 14 14" ><path d="M1.6,9 C6.4,8.6 9,5.8 9.4,1.4 L13,2.8 C12.4,9 8,12.6 3,13Z" fill="#3c64cc" stroke="#e02020" stroke-width=".7"/><path d="M1.6,9 C6.4,8.6 9,5.8 9.4,1.4 L11.2,2.2 C10.6,7.4 7.4,10.4 2.4,11Z" fill="#7e9ee6" opacity=".8"/><rect x="1.8" y="9.6" width="2.4" height="2.6" fill="#f6f6f6" stroke="#e02020" stroke-width=".7"/><path d="M11.4,0.6 L13.4,3.4" stroke="#e02020" stroke-width="1"/></svg>
<svg class="abs" style="left:371.2px;top:42.3px" width="14" height="14" viewBox="0 0 14 14" ><path d="M7,0.8 L3.4,4 H5.6 V5.6 H8.4 V4 H10.6Z" fill="#9a9a98"/><path d="M1.6,7.6 L4,6 H12.4 L10,7.6Z M1.6,10.4 L4,8.8 H12.4 L10,10.4Z M1.6,13 L4,11.4 H12.4 L10,13Z" fill="#b4b4b2" stroke="#8c8c8a" stroke-width=".5"/></svg>
<svg class="abs" style="left:392.8px;top:42.3px" width="14" height="14" viewBox="0 0 14 14" ><path d="M1,7 L4,4.6 H13 L10,7Z" fill="#d8d8d6" stroke="#9a9a98" stroke-width=".5"/><path d="M1,7 H10 V11.4 H1Z" fill="#bcbcba" stroke="#8e8e8c" stroke-width=".5"/><path d="M10,7 L13,4.6 V9 L10,11.4Z" fill="#a4a4a2" stroke="#8e8e8c" stroke-width=".5"/></svg>
<div class="abs" style="left:413.6px;top:46.8px;width:2px;height:1px;background:#dcdad6;box-shadow:0 2px 0 #dcdad6,0 4px 0 #dcdad6"></div>
<svg class="abs" style="left:421.5px;top:42.3px" width="14" height="14" viewBox="0 0 14 14" ><ellipse cx="8.6" cy="11.8" rx="4.4" ry="1.3" fill="#4a4a44" opacity=".6"/><circle cx="9.4" cy="4.6" r="3.7" fill="#8aa4ec" stroke="#4860b8" stroke-width=".5"/><circle cx="5.4" cy="8" r="4.6" fill="#1c44b4" stroke="#0c2470" stroke-width=".5"/><circle cx="4.2" cy="6.4" r="2" fill="#5c84e4" opacity=".8"/></svg>
<svg class="abs" style="left:442.8px;top:42.3px" width="14" height="14" viewBox="0 0 14 14" ><ellipse cx="8" cy="11.8" rx="4.6" ry="1.3" fill="#4a4a44" opacity=".5"/><circle cx="5.2" cy="8" r="4.4" fill="#9a9a98"/><circle cx="4.2" cy="6.8" r="2" fill="#b8b8b6"/><circle cx="8.8" cy="5" r="3.8" fill="#fbfbfb" stroke="#9c9c9a" stroke-width=".6"/></svg>
<svg class="abs" style="left:463.8px;top:42.3px" width="14" height="14" viewBox="0 0 14 14" ><ellipse cx="8" cy="11.8" rx="4.6" ry="1.3" fill="#4a4a44" opacity=".5"/><circle cx="5.2" cy="8" r="4.4" fill="#969694"/><circle cx="9" cy="5" r="3.9" fill="#969694"/><circle cx="4.4" cy="6.8" r="2" fill="#b0b0ae" opacity=".8"/><circle cx="8.6" cy="4.2" r="1.6" fill="#b0b0ae" opacity=".8"/></svg>
<svg class="abs" style="left:484.8px;top:42.3px" width="14" height="14" viewBox="0 0 14 14" ><circle cx="5" cy="8.4" r="4.2" fill="#f8f8f8" stroke="#6c6c6a" stroke-width=".7"/><circle cx="9" cy="5.2" r="4" fill="none" stroke="#6c6c6a" stroke-width=".7"/><path d="M5.4,6.2 A4,4 0 0 0 8.8,9.2 A4.2,4.2 0 0 0 5.4,6.2Z" fill="#8c8c8a"/><ellipse cx="9" cy="11.6" rx="3" ry=".9" fill="#5a5a58" opacity=".5"/></svg>
<svg class="abs" style="left:505.8px;top:42.3px" width="14" height="14" viewBox="0 0 14 14" ><ellipse cx="7.6" cy="12" rx="5" ry="1.2" fill="#4a4a44" opacity=".45"/><path d="M5.6,3 L1.6,11.4 C1.6,12.8 10.4,12.8 10.4,11.4 L8,5Z" fill="#9c9c9a" stroke="#7c7c7a" stroke-width=".5"/><circle cx="6.6" cy="3.6" r="2.6" fill="#e8e8e8" stroke="#8a8a88" stroke-width=".7"/><path d="M8.4,5.6 L12.6,9.4" stroke="#7a7a78" stroke-width="1"/></svg>
<svg class="abs" style="left:526.8px;top:42.3px" width="14" height="14" viewBox="0 0 14 14" ><path d="M1.6,3 L10,1.4 V10.4 L1.6,12Z" fill="#c6c6c4" stroke="#a0a09e" stroke-width=".6"/><path d="M4,3.6 L12.4,2 V11 L4,12.6Z" fill="#aeaeac" stroke="#90908e" stroke-width=".6"/><path d="M5.4,5 L11,4 V9.6 L5.4,10.8Z" fill="#969694"/><path d="M6.6,6 L9.8,5.4 V8.6 L6.6,9.4Z" fill="#b8b8b6"/></svg>
<svg class="abs" style="left:547.8px;top:42.3px" width="14" height="14" viewBox="0 0 14 14" ><path d="M4,2.4 L9.6,1.2 L11.4,2.2 V11 L5.8,12.4 L4,11.4Z" fill="#8c8c8a"/><path d="M4,2.4 L9.6,1.2 L11.4,2.2 L5.8,3.4Z" fill="#a6a6a4"/><path d="M5.8,3.4 V12.4" stroke="#787876" stroke-width=".5"/><path d="M0.8,5.2 L8.4,3.8 L13.4,4.6 L5.8,6.2Z M0.8,8.4 L8.4,7 L13.4,7.8 L5.8,9.4Z M1.4,11.2 L8.4,10 L12.8,10.8 L5.8,12.2Z" fill="#b0b0ae" stroke="#80807e" stroke-width=".4" opacity=".92"/><path d="M5.8,6.4 V7.4 L11.4,6.2 V5.2Z M5.8,9.6 V10.4 L11.4,9.2 V8.4Z" fill="#6e6e6c"/></svg>
<div class="abs" style="left:614.5px;top:67px;width:48px;height:13.5px;border:1px solid #c2bfb9;border-radius:2.5px;background:linear-gradient(#fdfdfc,#eceae7)"></div>
<svg class="abs" style="left:620.5px;top:68.6px" width="10" height="10" viewBox="0 0 10 10" ><path d="M2,2 L8.4,1.4 L8.2,8 L1.6,8.6Z" fill="none" stroke="#2a8a9c" stroke-width="1.2"/><path d="M0.8,1 L2.6,2.8 M9.4,0.6 L7.8,2.4 M9.2,9.2 L7.6,7.6 M0.6,9.4 L2.4,7.8" stroke="#1a6c7c" stroke-width="1.1"/><path d="M3.4,3.4 H6.8 V6.8 H3.4Z" fill="#bfe0e6"/></svg>
<div class="abs" style="left:668px;top:67px;width:12.5px;height:13.5px;border:1px solid #c2bfb9;border-radius:2.5px;background:linear-gradient(#fdfdfc,#eceae7)"></div>
<svg class="abs" style="left:669.2px;top:68.8px" width="10" height="10" viewBox="0 0 10 10" ><path d="M1,6.6 L5,2.6 L7,4.6 L3,8.6Z" fill="#2a9aac" stroke="#156878" stroke-width=".5"/><path d="M4.6,5.6 L7.6,2 L9.4,3.6 L6,7Z" fill="#7cc8d4" stroke="#156878" stroke-width=".5"/></svg>
<div class="abs" style="left:683.5px;top:67px;width:13px;height:13.5px;border:1px solid #c2bfb9;border-radius:2.5px;background:linear-gradient(#fdfdfc,#eceae7)"></div>
<div class="abs" style="left:685.5px;top:69px;width:9px;height:9.5px;background:#000"></div>
<div class="abs" style="left:699.5px;top:67px;width:13px;height:13.5px;border:1px solid #c2bfb9;border-radius:2.5px;background:linear-gradient(#fdfdfc,#eceae7)"></div>
<div class="abs" style="left:701.5px;top:69px;width:9px;height:9.5px;background:#cfcfcf"></div>
<div class="abs" style="left:717px;top:67.5px;width:27.5px;height:12.5px;border:1px solid #c2bfb9;border-radius:2.5px;background:#fff"></div>
<div class="abs" style="left:736.5px;top:68.5px;width:1px;height:10.5px;background:#e2e0dc"></div>
<svg class="abs" style="left:738.0px;top:69.3px" width="5" height="9" viewBox="0 0 5 9" ><path d="M0.6,3 L2.5,1 L4.4,3Z M0.6,6 L2.5,8 L4.4,6Z" fill="#6c6a66"/></svg>
<div class="abs" style="left:749.5px;top:67.5px;width:27.5px;height:12.5px;border:1px solid #c2bfb9;border-radius:2.5px;background:#fff"></div>
<div class="abs" style="left:769px;top:68.5px;width:1px;height:10.5px;background:#e2e0dc"></div>
<svg class="abs" style="left:770.5px;top:69.3px" width="5" height="9" viewBox="0 0 5 9" ><path d="M0.6,3 L2.5,1 L4.4,3Z M0.6,6 L2.5,8 L4.4,6Z" fill="#6c6a66"/></svg>
<div class="abs" style="left:783px;top:67px;width:12.5px;height:13.5px;border:1px solid #c2bfb9;border-radius:2.5px;background:linear-gradient(#fdfdfc,#eceae7)"></div>
<svg class="abs" style="left:784.2px;top:68.8px" width="10" height="10" viewBox="0 0 10 10" ><rect x="1" y="1" width="3.4" height="2.8" fill="#d82020"/><rect x="1" y="3.8" width="3.4" height="2.6" fill="#38a838"/><rect x="1" y="6.4" width="3.4" height="2.6" fill="#e8c020"/><path d="M4.6,3.6 H6.6 V2 L9.6,5 L6.6,8 V6.4 H4.6Z" fill="#2858c8" stroke="#143080" stroke-width=".4"/></svg>
</div>

<!-- COMBO VIEW -->
<div id="combo">
<!-- float / close buttons -->
<svg class="abs" style="left:193px;top:94px" width="18" height="8" viewBox="0 0 18 8">
<rect x="0.5" y="0.5" width="6" height="6" rx="1.3" fill="none" stroke="#55534e" stroke-width=".8"/>
<path d="M2.2,4.8 L4.8,2.2 M3.2,2.2 H4.8 V3.8" stroke="#3c3b37" stroke-width=".8" fill="none"/>
<rect x="10.5" y="0.5" width="6" height="6" rx="1.3" fill="none" stroke="#55534e" stroke-width=".8"/>
<path d="M12,2 L15,5 M15,2 L12,5" stroke="#2a2926" stroke-width="1"/>
</svg>
<!-- tab pane frame -->
<div class="abs" style="left:38px;top:121px;width:174px;height:311px;border:1px solid #e2e0dc;border-top:1px solid #d2cfca;background:#f2f1f0"></div>
<!-- tabs -->
<div class="abs" style="left:38.6px;top:105.6px;width:37px;height:16.8px;background:#f7f6f5;border:1px solid #d4d1cc;border-bottom:none;border-radius:3px 3px 0 0"></div>
<div class="abs" style="left:75.6px;top:106.9px;width:30px;height:15px;background:linear-gradient(#efeeec,#e3e1de);border:1px solid #d0cdc8;border-bottom:none;border-radius:3px 3px 0 0"></div>
<!-- tree -->
<div class="panel" style="left:39px;top:123px;width:172px;height:140px;border-color:#cbc8c3"></div>
<div class="abs" style="left:40px;top:124px;width:170px;height:14px;background:linear-gradient(#fbfbfa,#eeedeb);border-bottom:1px solid #d5d2cd"></div>
<svg class="abs" style="left:45px;top:153.3px" width="5" height="4" viewBox="0 0 5 4"><path d="M0.2,0.3 H4.7 L2.45,3.6 Z" fill="#5a5955"/></svg>
<svg class="abs" style="left:55px;top:150.2px" width="7" height="10" viewBox="0 0 7 10">
<path d="M0.5,0.5 H4.4 L6.5,2.6 V9.4 H0.5 Z" fill="#fdfdfd" stroke="#2c2c2c" stroke-width=".8"/>
<path d="M4.2,0.6 V2.8 H6.4" stroke="#2c2c2c" stroke-width=".6" fill="none"/>
<path d="M1.6,3 H3.6 M1.6,4.4 H5.4" stroke="#777" stroke-width=".6"/>
<rect x="1.5" y="5.6" width="1.8" height="2.4" fill="#28a0b0"/><rect x="3.6" y="5.6" width="1.8" height="2.4" fill="#c030a8"/>
</svg>
<svg class="abs" style="left:66px;top:162px" width="8" height="8" viewBox="0 0 8 8">
<path d="M0.5,1.6 L5.4,0.6 L7.4,1 V6 L5.6,7.4 L0.5,6.8 Z" fill="#0c1cd8" stroke="#06083c" stroke-width=".7" stroke-linejoin="round"/>
<path d="M0.5,1.6 L5.6,1.8 L7.4,1 M5.6,1.8 V7.4" stroke="#06083c" stroke-width=".6" fill="none"/>
</svg>
<!-- splitter grip -->
<div class="abs" style="left:122px;top:264.5px;width:5px;height:1px;background:#dcdad6"></div>
<!-- property -->
<div class="panel" style="left:39px;top:267px;width:172px;height:146px;border-color:#cbc8c3"></div>
<div class="abs" style="left:40px;top:268px;width:170px;height:14px;background:linear-gradient(#fbfbfa,#eeedeb);border-bottom:1px solid #d5d2cd"></div>
<div class="abs" style="left:98px;top:268px;width:1px;height:14px;background:#d5d2cd"></div>
<!-- View / Data tabs -->
<svg class="abs" style="left:38px;top:412px" width="72" height="21" viewBox="38 412 72 21">
<path d="M68.4,414.2 L72.6,428 Q73.2,430 75.2,430 H88.2 Q90.2,430 90.8,428 L95.4,414.2" fill="#eeedea" stroke="#86837d" stroke-width=".7"/>
<path d="M38.8,413 L43.8,429.2 Q44.5,431.2 46.5,431.2 H60 Q62,431.2 62.7,429.2 L68.2,413" fill="#fbfbfa" stroke="#6a6863" stroke-width=".7"/>
</svg>
</div>

<div class="abs" style="left:214px;top:88.6px;width:586px;height:1.4px;background:#fdfdfc"></div>
<!-- 3D VIEW -->
<div id="view3d">
<div class="abs" style="left:0;top:0;width:585px;height:1.6px;background:linear-gradient(#2a2a60,#303064)"></div>
<svg width="585" height="323" viewBox="215 90 585 323" style="position:absolute;left:0;top:0">
<path d="M390.7,243.8 L432.5,146 L453.9,240.6 L481.6,174.2 L506,233.2 L546.9,153.7 L555.8,244.9 L598.8,140.1 L624.2,242.6 L623.4,262 C622.5,285 621,300 619.9,307.2 C618.5,318 618,324 617,330.3 C615,341 612.5,348 609.8,353.4 C607,359 604,362.6 600.6,362.6 C597,362.6 595,360 593.9,356.2 L573.7,282.6 C571.5,274.5 567,264.4 562.2,264.4 C558.5,264.4 557,268 556.4,271.1 L542.5,340.4 C541.5,344.5 539.5,346.3 537.6,346.3 C535.3,346.3 534,343 533.3,338.9 L517.4,263.9 C516,258.5 514,255.8 512.2,255.8 C510,255.8 508,259.5 507,263.9 L486.8,347.6 C485.5,352.5 483,354.8 480.5,354.8 C478,354.8 477,352.5 476.7,349 L470.1,272.5 C469.3,267 467.5,263.9 464.3,263.9 C461.5,263.9 459.5,266.5 457.9,269.6 L429.1,333.2 C427,337.5 425,340 423.3,341.8 C420.5,345.5 418,347.6 415.2,347.6 C412,347.6 410,346.5 408.9,344.1 L394.4,287 C393,275 392,262 391.3,256 Z" fill="none" stroke="#17171f" stroke-width="1.3" stroke-linejoin="miter"/>
<line x1="501.8" y1="239" x2="501.8" y2="140" stroke="#1f8434" stroke-width="1.35"/>
<path d="M501.8,131 L499.7,145 L503.9,145 Z" fill="#1f8434"/>
<line x1="501.5" y1="239.2" x2="600" y2="239.2" stroke="#902a36" stroke-width="1.6"/>
<path d="M608.5,239.2 L594.5,237 L594.5,241.4 Z" fill="#902a36"/>
<circle cx="501.5" cy="239.1" r="2.6" fill="#0e0e22"/>
<line x1="783.7" y1="396.8" x2="783.7" y2="388" stroke="#18a028" stroke-width="1.3"/>
<path d="M783.7,385.6 L782.4,388.8 L785,388.8Z" fill="#18a028"/>
<line x1="783.7" y1="396.8" x2="792" y2="396.8" stroke="#b02030" stroke-width="1.3"/>
<path d="M795,396.8 L791.6,395.6 L791.6,398Z" fill="#b02030"/>
<rect x="782.8" y="395.9" width="1.9" height="1.9" fill="#2020c0"/>
<path d="M785.6,382.2 L787,384 L788.4,382.2 M787,384 V385.8" stroke="#26262e" stroke-width=".7" fill="none"/>
<path d="M785.6,393.3 H788.2 L785.6,396 H788.4" stroke="#26262e" stroke-width=".7" fill="none"/>
<path d="M796.6,393.6 L799.6,397 M799.6,393.6 L796.6,397" stroke="#26262e" stroke-width=".7" fill="none"/>
</svg>
</div>

<!-- BOTTOM -->
<div id="bottom">
<!-- mdi tabs -->
<div class="abs" style="left:215px;top:413px;width:585px;height:20px;background:#f2f1f0;border-bottom:1px solid #dad7d2"></div>
<div class="abs" style="left:215.5px;top:413px;width:64px;height:17px;background:linear-gradient(#e4e2de,#ecebe8);border:1px solid #d2cfca;border-top:none;border-radius:0 0 3px 3px"></div>
<svg class="abs" style="left:264.6px;top:418.8px" width="8" height="8" viewBox="0 0 8 8"><path d="M1.2,1.2 L6.8,6.8 M6.8,1.2 L1.2,6.8" stroke="#55544f" stroke-width="1.7" stroke-linecap="butt"/><path d="M0.6,1.8 L1.8,0.6 M6.2,0.6 L7.4,1.8 M0.6,6.2 L1.8,7.4 M6.2,7.4 L7.4,6.2" stroke="#55544f" stroke-width=".9"/></svg>
<div class="abs" style="left:279.5px;top:412.5px;width:91px;height:19.5px;background:#fbfbfa;border:1px solid #c9c6c0;border-top:none;border-radius:0 0 3px 3px"></div>
<svg class="abs" style="left:284px;top:417.6px" width="9" height="9" viewBox="0 0 9 9">
<path d="M0.6,0.6 H4.8 V2.4 H2.4 V3.8 H4.2 V5.4 H2.4 V8 H0.6 Z" fill="#d01c1c"/>
<circle cx="5.6" cy="5.6" r="2.7" fill="#1c3fae"/><circle cx="5.6" cy="5.6" r="1.1" fill="#fbfbfa"/>
<path d="M5.6,2.4 V3.4 M5.6,7.8 V8.8 M2.4,5.6 H3.4 M7.8,5.6 H8.8 M3.4,3.4 L4,4 M7.8,3.4 L7.2,4 M3.4,7.8 L4,7.2 M7.8,7.8 L7.2,7.2" stroke="#1c3fae" stroke-width="1"/>
</svg>
<svg class="abs" style="left:356.2px;top:419.6px" width="8" height="8" viewBox="0 0 8 8"><path d="M1.2,1.2 L6.8,6.8 M6.8,1.2 L1.2,6.8" stroke="#55544f" stroke-width="1.7" stroke-linecap="butt"/><path d="M0.6,1.8 L1.8,0.6 M6.2,0.6 L7.4,1.8 M0.6,6.2 L1.8,7.4 M6.2,7.4 L7.4,6.2" stroke="#55544f" stroke-width=".9"/></svg>
<!-- status bar -->
</div>
<span class="t" id="t0" style="left:3.75px;top:3.10px;font-size:8.5px;line-height:1;color:#eeeae2;font-weight:bold;letter-spacing:0.068px;">FreeCAD</span>
<span class="t" id="t1" style="left:719.40px;top:3.19px;font-size:8.4px;line-height:1;color:#e4e0d8;letter-spacing:0.283px;">mi&eacute;</span>
<span class="t" id="t2" style="left:735.60px;top:3.19px;font-size:8.4px;line-height:1;color:#e4e0d8;letter-spacing:0.336px;">jul</span>
<span class="t" id="t3" style="left:749.00px;top:3.19px;font-size:8.4px;line-height:1;color:#e4e0d8;letter-spacing:-0.672px;">2</span>
<span class="t" id="t4" style="left:757.75px;top:3.19px;font-size:8.4px;line-height:1;color:#e4e0d8;letter-spacing:-0.144px;">23:33</span>
<span class="t" id="t5" style="left:615.10px;top:3.37px;font-size:7.0px;line-height:1;color:#3c3b37;font-weight:bold;letter-spacing:-0.881px;">Es</span>
<span class="t" id="t6" style="left:43.25px;top:70.02px;font-size:8.6px;line-height:1;color:#3c3b37;letter-spacing:-0.081px;">active command:</span>
<span class="t" id="t7" style="left:112.75px;top:70.02px;font-size:8.6px;line-height:1;color:#3c3b37;font-weight:bold;letter-spacing:-0.059px;">None</span>
<span class="t" id="t8" style="left:320.25px;top:22.02px;font-size:8.6px;line-height:1;color:#3c3b37;letter-spacing:-0.004px;">Part</span>
<span class="t" id="t9" style="left:633.75px;top:69.85px;font-size:8.8px;line-height:1;color:#3c3b37;letter-spacing:-0.195px;">None</span>
<span class="t" id="t10" style="left:720.00px;top:69.85px;font-size:8.8px;line-height:1;color:#3c3b37;letter-spacing:-0.146px;">2px</span>
<span class="t" id="t11" style="left:752.50px;top:69.85px;font-size:8.8px;line-height:1;color:#3c3b37;letter-spacing:-0.056px;width:15.8px;overflow:hidden;">0,20</span>
<span class="t" id="t12" style="left:39.50px;top:94.02px;font-size:8.6px;line-height:1;color:#3c3b37;letter-spacing:-0.006px;">Combo View</span>
<span class="t" id="t13" style="left:42.75px;top:110.02px;font-size:8.6px;line-height:1;color:#2e2d2a;letter-spacing:0.179px;">Project</span>
<span class="t" id="t14" style="left:80.25px;top:110.02px;font-size:8.6px;line-height:1;color:#2e2d2a;letter-spacing:-0.264px;">Tasks</span>
<span class="t" id="t15" style="left:42.40px;top:127.02px;font-size:8.6px;line-height:1;color:#3c3b37;letter-spacing:0.141px;">Labels &amp; Attributes</span>
<span class="t" id="t16" style="left:42.00px;top:140.02px;font-size:8.6px;line-height:1;color:#2e2d2a;letter-spacing:0.155px;">Application</span>
<span class="t" id="t17" style="left:66.75px;top:151.10px;font-size:8.5px;line-height:1;color:#24231f;font-weight:bold;letter-spacing:-0.269px;">Unnamed</span>
<span class="t" id="t18" style="left:78.00px;top:162.10px;font-size:8.5px;line-height:1;color:#24231f;font-weight:bold;letter-spacing:0.111px;">path2985</span>
<span class="t" id="t19" style="left:43.25px;top:272.02px;font-size:8.6px;line-height:1;color:#3c3b37;letter-spacing:0.252px;">Property</span>
<span class="t" id="t20" style="left:102.00px;top:272.02px;font-size:8.6px;line-height:1;color:#3c3b37;letter-spacing:0.131px;">Value</span>
<span class="t" id="t21" style="left:44.50px;top:418.02px;font-size:8.6px;line-height:1;color:#2e2d2a;letter-spacing:0.154px;">View</span>
<span class="t" id="t22" style="left:73.60px;top:418.02px;font-size:8.6px;line-height:1;color:#2e2d2a;letter-spacing:-0.164px;">Data</span>
<span class="t" id="t23" style="left:42.00px;top:437.02px;font-size:8.6px;line-height:1;color:#3c3b37;letter-spacing:0.123px;">Valid</span>
<span class="t" id="t24" style="left:219.60px;top:419.02px;font-size:8.6px;line-height:1;color:#3c3b37;letter-spacing:0.074px;">Start page</span>
<span class="t" id="t25" style="left:298.40px;top:419.02px;font-size:8.6px;line-height:1;color:#3c3b37;letter-spacing:-0.080px;">Unnamed : 1*</span>
<span class="t" id="t26" style="left:721.50px;top:438.02px;font-size:8.6px;line-height:1;color:#3c3b37;letter-spacing:-0.062px;">267.60 x 147.60 mm</span>
</body>
</html>
